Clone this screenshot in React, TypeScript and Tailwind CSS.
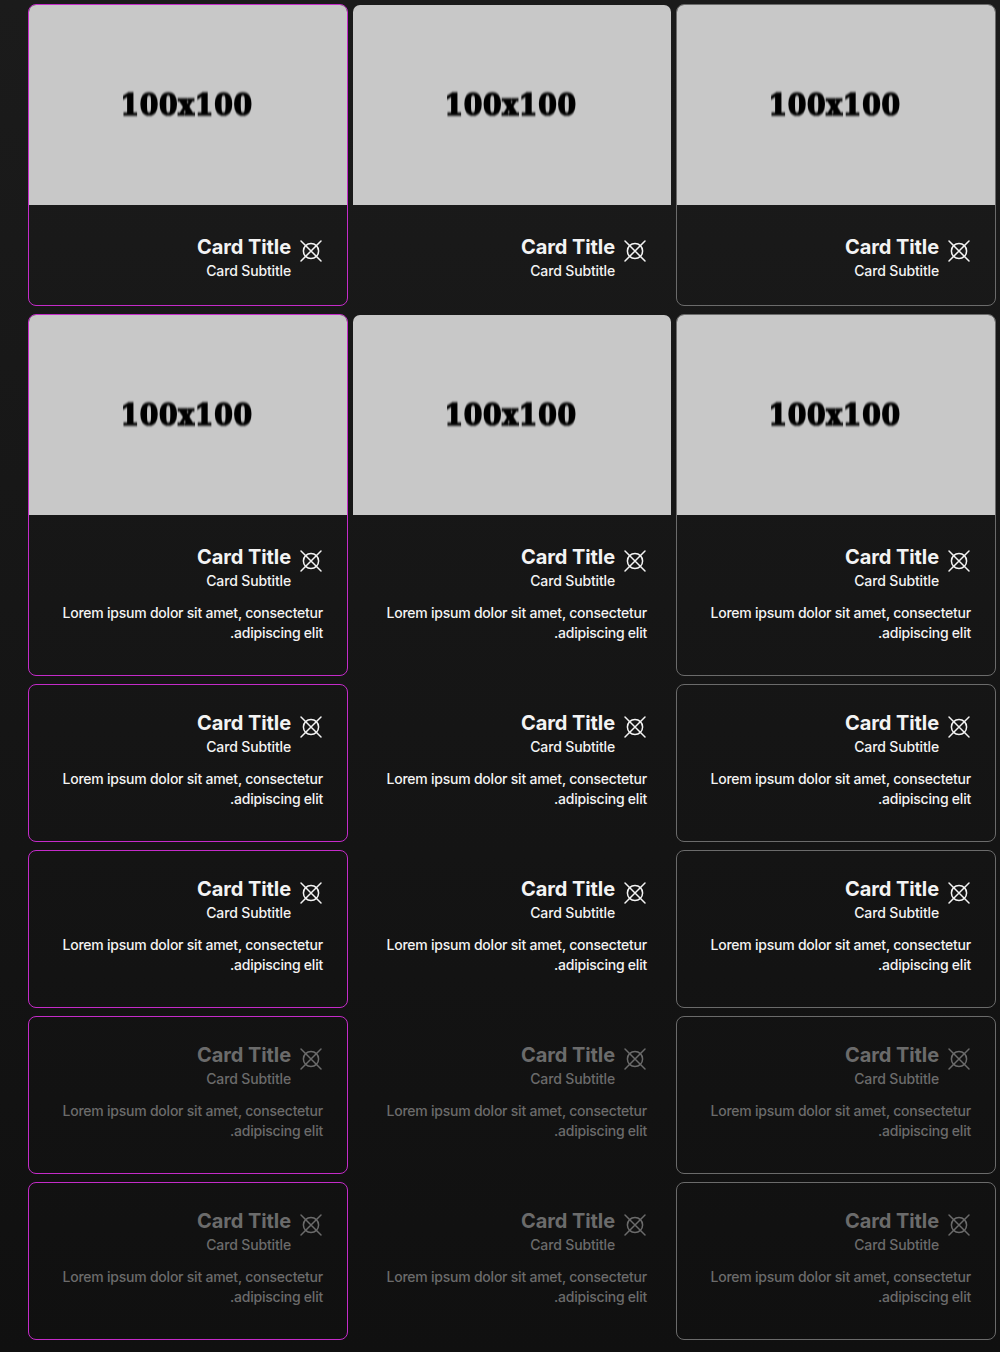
type Variant = 'primary' | 'plain' | 'outlined';
type Row = { media?: boolean; body?: boolean; disabled?: boolean; height: string };

const rows: Row[] = [
  { media: true, height: 'h-[302px]' },
  { media: true, body: true, height: 'h-[362px]' },
  { body: true, height: 'h-[158px]' },
  { body: true, height: 'h-[158px]' },
  { body: true, disabled: true, height: 'h-[158px]' },
  { body: true, disabled: true, height: 'h-[158px]' },
];

// Listed in reading order for the right-to-left grid.
const variants: Variant[] = ['outlined', 'plain', 'primary'];

const borders: Record<Variant, string> = {
  primary: 'border-[#c42bc9]',
  plain: 'border-transparent',
  outlined: 'border-[#6b6b6b]',
};

function CrossedCircle() {
  return (
    <svg className="h-6 w-6 shrink-0" viewBox="0 0 24 24" fill="none" stroke="currentColor" strokeWidth="1.5" strokeLinecap="round">
      <circle cx="12" cy="12" r="7.6" />
      <path d="M2 2l20 20M22 2L2 22" />
    </svg>
  );
}

function Placeholder() {
  return (
    <div dir="ltr" className="flex h-[200px] w-full shrink-0 items-center justify-center overflow-hidden rounded-t-[7px] bg-[#c8c8c8] text-black">
      <span className="block origin-center -translate-x-px -translate-y-px scale-x-[0.875] font-['DejaVu_Serif'] text-[30.5px] leading-10 font-bold tracking-[0.8px] whitespace-nowrap blur-[0.8px] [-webkit-text-stroke:1.6px_black]">
        100x100
      </span>
    </div>
  );
}

function Card({ row, variant }: { row: Row; variant: Variant }) {
  return (
    <article className={`flex w-80 flex-col rounded-lg border ${row.height} ${borders[variant]}`}>
      {row.media && <Placeholder />}
      <div className={`px-6 ${row.media ? 'pt-[29px]' : 'pt-[25px]'} ${row.disabled ? 'text-[#6b6b6b]' : 'text-[#f3f3f3]'}`}>
        <header className="flex items-start gap-2">
          <div className="pt-[5px]">
            <CrossedCircle />
          </div>
          <div>
            <h2 className="text-xl leading-[26px] font-bold tracking-[-0.1px]">Card Title</h2>
            <h3 className="mt-px text-sm leading-5 font-medium tracking-[-0.15px]">Card Subtitle</h3>
          </div>
        </header>
        {row.body && (
          <p className="mt-3 text-sm leading-5 font-medium tracking-[-0.23px]">
            Lorem ipsum dolor sit amet, consectetur adipiscing elit.
          </p>
        )}
      </div>
    </article>
  );
}

export default function App() {
  return (
    <main
      dir="rtl"
      className="flex h-[1352px] w-[1000px] flex-col gap-2 bg-linear-to-b from-[#1b1b1b] to-[#101010] px-1 pt-1 font-['Inter',sans-serif]"
    >
      {rows.map((row, i) => (
        <section key={i} className="flex gap-1">
          {variants.map((variant) => (
            <Card key={variant} row={row} variant={variant} />
          ))}
        </section>
      ))}
    </main>
  );
}
